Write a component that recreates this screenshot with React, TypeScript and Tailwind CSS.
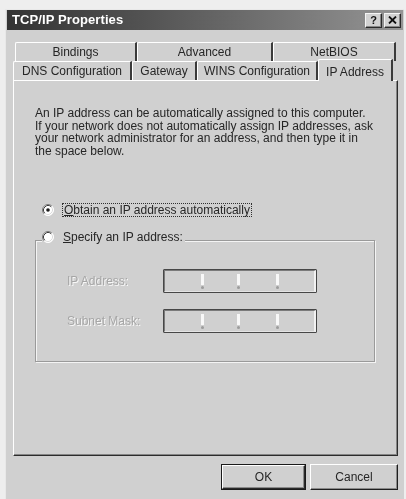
import React from "react";

const F = "font-['Liberation_Sans','Arial',sans-serif]";

function Radio({ checked }: { checked: boolean }) {
  return (
    <svg width="12" height="12" viewBox="0 0 12 12" className="shrink-0">
      <circle cx="6" cy="6" r="5.5" fill="#ffffff" />
      <path d="M2.11 9.89 A5.5 5.5 0 0 1 9.89 2.11" stroke="#7c7c7c" strokeWidth="1" fill="none" />
      <path d="M9.89 2.11 A5.5 5.5 0 0 1 2.11 9.89" stroke="#ffffff" strokeWidth="1" fill="none" />
      <path d="M2.82 9.18 A4.5 4.5 0 0 1 9.18 2.82" stroke="#3c3c3c" strokeWidth="1" fill="none" />
      <path d="M9.18 2.82 A4.5 4.5 0 0 1 2.82 9.18" stroke="#dcdcdc" strokeWidth="1" fill="none" />
      {checked && <circle cx="6" cy="6" r="1.8" fill="#1a1a1a" />}
    </svg>
  );
}

function TitleBtn({ children }: { children: React.ReactNode }) {
  return (
    <div className="w-[17px] h-[15px] bg-[#d2d2d2] border-t border-l border-[#f4f4f4] border-r border-b border-r-[#2a2a2a] border-b-[#2a2a2a] shadow-[inset_-1px_-1px_0_#888] flex items-center justify-center">
      {children}
    </div>
  );
}

function BackTab({ w, label }: { w: string; label: string }) {
  return (
    <div
      className={`${w} h-full flex items-center justify-center border-t border-l border-white border-r-2 border-r-[#3a3a3a] rounded-tl-[2px] text-[12px]`}
    >
      {label}
    </div>
  );
}

function Sep() {
  return (
    <div className="w-[3px] flex flex-col items-center shrink-0 mt-[1px]">
      <div className="w-[3px] h-[11px] bg-[#f8f8f8]" />
      <div className="w-[3px] h-[3px] mt-[1px] rounded-full bg-[#9c9c9c]" />
    </div>
  );
}

function IpField() {
  return (
    <div className="w-[154px] h-[24px] border border-[#474747] rounded-[1px]">
      <div className="w-full h-full border-t border-l border-[#7a7a7a] border-r-2 border-r-[#f2f2f2] border-b border-b-[#e4e4e4] bg-[#d0d0d0] flex items-center">
        <div className="w-[36px] shrink-0" />
        <Sep />
        <div className="w-[33px] shrink-0" />
        <Sep />
        <div className="w-[36px] shrink-0" />
        <Sep />
        <div className="flex-1" />
      </div>
    </div>
  );
}

export default function App() {
  return (
    <div className={`w-[406px] h-[499px] overflow-hidden bg-[#eeeeee] pt-[9px] pl-[5px] ${F} text-[#262626] blur-[0.55px]`}>
      <div className="w-[399px] h-[490px] bg-[#d0d0d0] border-t border-l border-[#e8e8e8] flex flex-col">
        {/* Title bar */}
        <div className="mx-[1px] h-[20px] shrink-0 flex items-center bg-gradient-to-r from-[#333333] to-[#959595] pl-[5px] pr-[2px]">
          <span className="text-white font-bold text-[13px] tracking-[0.1px]">TCP/IP Properties</span>
          <div className="ml-auto flex gap-[2px]">
            <TitleBtn>
              <span className="text-[11px] font-bold leading-none text-[#111]">?</span>
            </TitleBtn>
            <TitleBtn>
              <svg width="9" height="8" viewBox="0 0 9 8">
                <path d="M1 0.5 L8 7.5 M8 0.5 L1 7.5" stroke="#111" strokeWidth="1.8" />
              </svg>
            </TitleBtn>
          </div>
        </div>

        {/* Tabs + panel */}
        <div className="ml-[7px] mt-[12px] w-[385px] flex flex-col">
          <div className="ml-[2px] h-[19px] flex">
            <BackTab w="w-[122px]" label="Bindings" />
            <BackTab w="w-[136px]" label="Advanced" />
            <BackTab w="w-[123px]" label="NetBIOS" />
          </div>
          <div className="h-[19px] flex items-end">
            <BackTab w="w-[119px]" label="DNS Configuration" />
            <BackTab w="w-[65px]" label="Gateway" />
            <BackTab w="w-[121px]" label="WINS Configuration" />
            <div className="relative z-10 w-[75px] h-[22px] -mb-[1px] bg-[#d0d0d0] flex items-start justify-center pt-[3px] border-t border-l border-white border-r-2 border-r-[#3a3a3a] rounded-tl-[2px] text-[12px]">
              IP Address
            </div>
          </div>

          {/* Panel */}
          <div className="w-[385px] h-[376px] border-t border-l border-white border-r border-b border-r-[#2c2c2c] border-b-[#2c2c2c] shadow-[inset_-1px_-1px_0_#858585] flex flex-col">
            <div className="ml-[21px] mt-[26px] text-[12px] leading-[12.5px] whitespace-nowrap">
              <div>An IP address can be automatically assigned to this computer.</div>
              <div>If your network does not automatically assign IP addresses, ask</div>
              <div>your network administrator for an address, and then type it in</div>
              <div>the space below.</div>
            </div>

            <div className="ml-[28px] mt-[46px] h-[14px] flex items-center gap-[8px] text-[12px]">
              <Radio checked />
              <span className="border border-dotted border-[#303030] px-[1px] leading-[12px]">
                <span className="underline">O</span>btain an IP address automatically
              </span>
            </div>

            <div className="ml-[21px] mt-[23px] w-[340px] h-[122px] border border-[#9a9a9a] shadow-[1px_1px_0_#f4f4f4,inset_1px_1px_0_#f4f4f4] flex flex-col">
              <div className="-mt-[11px] ml-[6px] w-fit h-[14px] bg-[#d0d0d0] pr-[2px] flex items-center gap-[9px] text-[12px]">
                <Radio checked={false} />
                <span>
                  <span className="underline">S</span>pecify an IP address:
                </span>
              </div>
              <div className="mt-[25px] pl-[31px] flex items-center">
                <span className="w-[96px] text-[12px] text-[#a6a6a6] [text-shadow:1px_1px_0_#f8f8f8]">IP Address:</span>
                <IpField />
              </div>
              <div className="mt-[16px] pl-[31px] flex items-center">
                <span className="w-[96px] text-[12px] text-[#a6a6a6] [text-shadow:1px_1px_0_#f8f8f8]">Subnet Mask:</span>
                <IpField />
              </div>
            </div>
          </div>

          {/* Buttons */}
          <div className="mt-[8px] flex justify-end gap-[4px]">
            <div className="w-[85px] h-[26px] border border-[#1a1a1a]">
              <div className="w-full h-full border-t border-l border-white border-r border-b border-r-[#2a2a2a] border-b-[#2a2a2a] shadow-[inset_-1px_-1px_0_#8a8a8a] flex items-center justify-center text-[12px]">
                OK
              </div>
            </div>
            <div className="w-[88px] h-[26px] border-t border-l border-white border-r border-b border-r-[#1e1e1e] border-b-[#1e1e1e] shadow-[inset_-1px_-1px_0_#8a8a8a] flex items-center justify-center text-[12px]">
              Cancel
            </div>
          </div>
        </div>
      </div>
    </div>
  );
}
